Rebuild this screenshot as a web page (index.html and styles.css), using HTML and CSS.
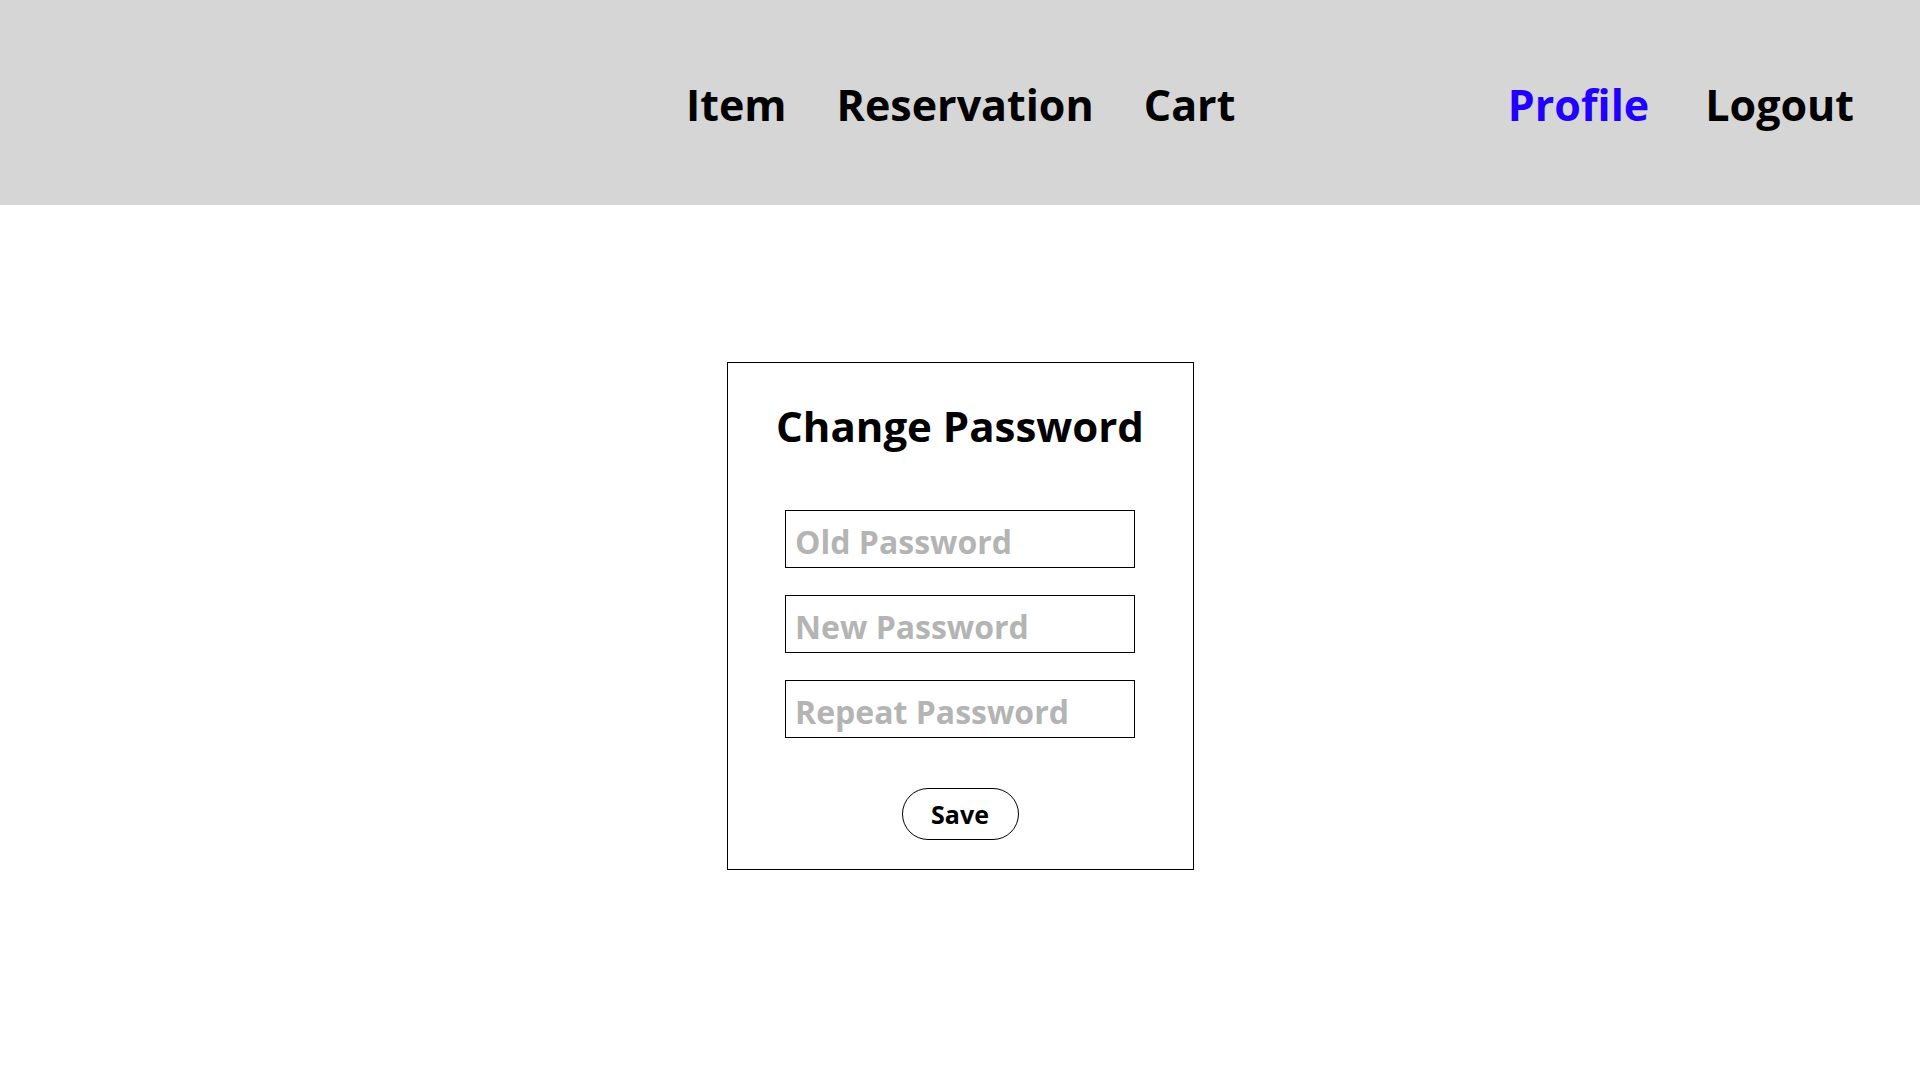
FILE: index.html
```html
<!DOCTYPE html>
<html lang="en">
<head>
<meta charset="utf-8">
<title>Change Password</title>
<link rel="stylesheet" href="styles.css">
</head>
<body>
<header class="topbar">
  <nav class="nav nav-main">
    <a class="nav-link" href="#">Item</a>
    <a class="nav-link" href="#">Reservation</a>
    <a class="nav-link" href="#">Cart</a>
  </nav>
  <nav class="nav nav-user">
    <a class="nav-link active" href="#">Profile</a>
    <a class="nav-link" href="#">Logout</a>
  </nav>
</header>
<main class="content">
  <form class="card">
    <h1 class="card-title">Change Password</h1>
    <div class="fields">
      <input class="field" type="password" placeholder="Old Password">
      <input class="field" type="password" placeholder="New Password">
      <input class="field" type="password" placeholder="Repeat Password">
    </div>
    <button class="save" type="button">Save</button>
  </form>
</main>
</body>
</html>
```
FILE: styles.css
```css
* { box-sizing: border-box; }
html, body { margin: 0; padding: 0; }
body {
  font-family: "Open Sans", "Noto Sans", sans-serif;
  font-variant-ligatures: none;
  background: #ffffff;
  color: #000;
}
.topbar {
  height: 205px;
  background: #d6d6d6;
  display: flex;
  align-items: center;
  justify-content: space-between;
  padding: 4px 66px 0 686px;
}
.nav { display: flex; align-items: center; }
.nav-main { gap: 50px; }
.nav-user { gap: 56px; }
.nav-link {
  font-size: 43px;
  font-weight: 700;
  color: #000;
  text-decoration: none;
  line-height: 1;
}
.nav-link.active { color: #2200ff; }
.content {
  display: flex;
  justify-content: center;
  padding-top: 157px;
}
.card {
  width: 467px;
  height: 508px;
  border: 1px solid #000;
  display: flex;
  flex-direction: column;
  align-items: center;
  padding-top: 33px;
}
.card-title {
  margin: 0;
  font-size: 42px;
  font-weight: 700;
  line-height: 60px;
}
.fields {
  display: flex;
  flex-direction: column;
  gap: 27px;
  margin-top: 54px;
}
.field {
  width: 350px;
  height: 58px;
  border: 1px solid #000;
  border-radius: 0;
  padding: 4px 9px 0;
  font-family: inherit;
  font-size: 32px;
  font-weight: 700;
  color: #000;
  outline: none;
}
.field::placeholder { color: #b4b4b4; opacity: 1; font-weight: 700; }
.save {
  margin-top: 50px;
  width: 117px;
  height: 52px;
  border: 1px solid #000;
  border-radius: 26px;
  background: #fff;
  font-family: inherit;
  font-size: 25px;
  font-weight: 700;
  color: #000;
  padding: 0;
}
```
